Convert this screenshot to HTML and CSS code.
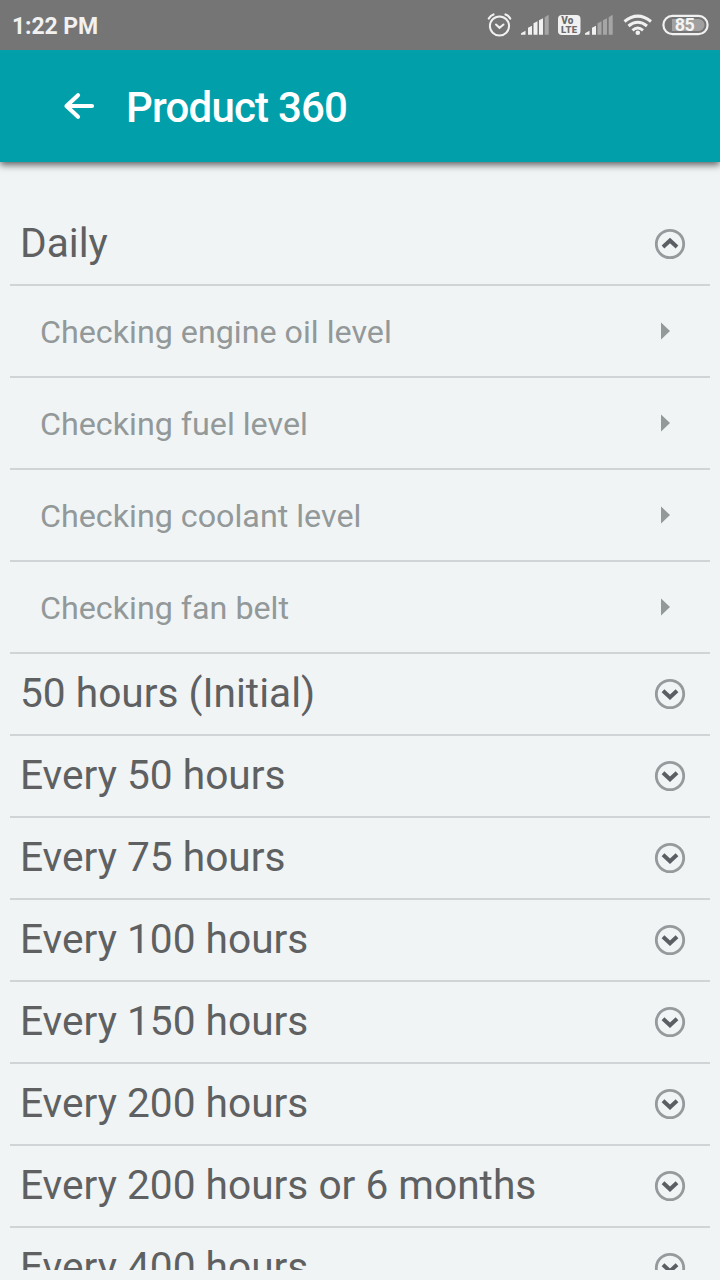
FILE: index.html
```html
<!DOCTYPE html>
<html lang="en">
<head>
<meta charset="utf-8">
<title>Product 360</title>
<link rel="stylesheet" href="styles.css">
</head>
<body>
<svg class="defs" width="0" height="0" aria-hidden="true">
  <symbol id="down" viewBox="0 0 32 32"><circle cx="16" cy="16" r="13.7" fill="none" stroke="#969a9c" stroke-width="2.8"/><path d="M9 12.700 16 19.200 23 12.700" fill="none" stroke="#5b5f63" stroke-width="4"/></symbol>
  <symbol id="up" viewBox="0 0 32 32"><circle cx="16" cy="16" r="13.7" fill="none" stroke="#969a9c" stroke-width="2.8"/><path d="M9 19 16 12.500 23 19" fill="none" stroke="#5b5f63" stroke-width="4"/></symbol>
</svg>
<div class="screen">
  <div class="status">
    <span class="time">1:22 PM</span>
    <svg class="indicators" width="240" height="50" viewBox="480 0 240 50">
      <g fill="none" stroke="#f1f1f1" stroke-linecap="round">
        <circle cx="499.5" cy="26" r="9.6" stroke-width="2"/>
        <path d="M496 24.500 499.500 27.800 503.500 24.500" stroke-width="2"/>
        <path d="M488.800 18.500Q490.500 15.500 493.500 14.500M510.200 18.500Q508.500 15.500 505.500 14.500" stroke-width="2.200"/>
      </g>
      <path fill="#f1f1f1" d="M521 34.700v-1.500l4.500-2.500v4zM528 34.700v-7l4-2v9zM533.500 34.700v-11.500l4-2v13.500zM539 34.700v-14.500l4-2v16.500z"/>
      <path fill="#a5a5a5" d="M544.700 34.700v-17.500l4-2.500v20z"/>
      <rect x="558" y="15" width="22.500" height="20" rx="4" fill="#f1f1f1"/>
      <text x="561.200" y="24.200" class="volte vo">Vo</text>
      <text x="561" y="33" class="volte">LTE</text>
      <path fill="#f1f1f1" d="M585 34.700v-1.500l4.500-2.500v4zM592 34.700v-7l4-2v9z"/>
      <path fill="#a5a5a5" d="M597.500 34.700v-11.500l4-2v13.500zM603 34.700v-14.500l4-2v16.500zM608.700 34.700v-17.500l4-2.500v20z"/>
      <g fill="none" stroke="#f1f1f1" stroke-width="3">
        <path d="M624.500 21.500Q637.700 10.800 651 21.500"/>
        <path d="M628.500 26Q637.700 18.500 647 26"/>
        <path d="M632.500 30.300Q637.700 25.800 643 30.300"/>
      </g>
      <circle cx="637.800" cy="32.800" r="2.300" fill="#f1f1f1"/>
      <rect x="663.400" y="15.900" width="44.200" height="18.200" rx="9.100" fill="none" stroke="#f1f1f1" stroke-width="2.200"/>
      <path fill="#a0a0a0" d="M672 19H698.500A6 6 0 0 1 698.500 31H672z"/>
      <text x="684.500" y="31.200" class="charge">85</text>
    </svg>
  </div>
  <header class="appbar">
    <svg class="back" width="32" height="28" viewBox="0 0 32 28"><path d="M15 3.300 3.500 14 15 24.700M3.500 14H29" fill="none" stroke="#fff" stroke-width="4.200" stroke-linecap="round" stroke-linejoin="round"/></svg>
    <h1 class="title">Product 360</h1>
  </header>
  <main class="list">
    <div class="row"><span>Daily</span><svg class="chev"><use href="#up"/></svg></div>
    <div class="row sub"><span>Checking engine oil level</span><i class="arrow"></i></div>
    <div class="row sub"><span>Checking fuel level</span><i class="arrow"></i></div>
    <div class="row sub"><span>Checking coolant level</span><i class="arrow"></i></div>
    <div class="row sub"><span>Checking fan belt</span><i class="arrow"></i></div>
    <div class="row"><span>50 hours (Initial)</span><svg class="chev"><use href="#down"/></svg></div>
    <div class="row"><span>Every 50 hours</span><svg class="chev"><use href="#down"/></svg></div>
    <div class="row"><span>Every 75 hours</span><svg class="chev"><use href="#down"/></svg></div>
    <div class="row"><span>Every 100 hours</span><svg class="chev"><use href="#down"/></svg></div>
    <div class="row"><span>Every 150 hours</span><svg class="chev"><use href="#down"/></svg></div>
    <div class="row"><span>Every 200 hours</span><svg class="chev"><use href="#down"/></svg></div>
    <div class="row"><span>Every 200 hours or 6 months</span><svg class="chev"><use href="#down"/></svg></div>
    <div class="row"><span>Every 400 hours</span><svg class="chev"><use href="#down"/></svg></div>
  </main>
</div>
</body>
</html>
```

FILE: styles.css
```css
* { box-sizing: border-box; }
body { margin: 0; background: #f0f4f5; font-family: Roboto, "Liberation Sans", sans-serif; }
.defs { display: none; }
.screen { display: flex; flex-direction: column; height: 1280px; width: 720px; padding-bottom: 10px; overflow: hidden; }
.status { position: relative; z-index: 1; flex: none; height: 50px; background: #757575; display: flex; justify-content: space-between; align-items: center; padding-left: 12px; }
.time { color: #f1f1f1; font-size: 23px; font-weight: 700; line-height: 30px; padding-top: 4px; letter-spacing: -0.1px; }
.indicators { display: block; }
.volte { font-size: 9.5px; font-weight: 900; fill: #6b6b6b; letter-spacing: 0.3px; }
.vo { font-size: 10px; }
.charge { font-size: 18px; font-weight: 700; fill: #f4f4f4; text-anchor: middle; letter-spacing: -0.5px; }
.appbar { flex: none; height: 112px; background: #009faa; display: flex; align-items: center; gap: 31px; padding-left: 63px; box-shadow: 0 3px 7px rgba(0, 0, 0, 0.6); }
.title { margin: 0; padding-top: 4px; color: #fff; font-size: 42px; font-weight: 500; line-height: 50px; letter-spacing: -0.8px; white-space: nowrap; }
.list { flex: 1; min-height: 0; overflow: hidden; margin: 0 10px; padding-top: 42px; }
.row { height: 82px; display: flex; align-items: center; justify-content: space-between; border-bottom: 2px solid #d0d4d6; padding: 0 24px 0 10px; color: #5e6061; font-size: 40.65px; line-height: 48px; white-space: nowrap; }
.row span { padding-bottom: 2px; }
.sub { height: 92px; padding: 0 40px 0 30px; color: #939899; font-size: 32.25px; }
.sub span { padding: 2px 0 0; }
.chev { width: 32px; height: 32px; }
.arrow { width: 9.5px; height: 18px; background: #939899; clip-path: polygon(0 0, 100% 50%, 0 100%); }
```
